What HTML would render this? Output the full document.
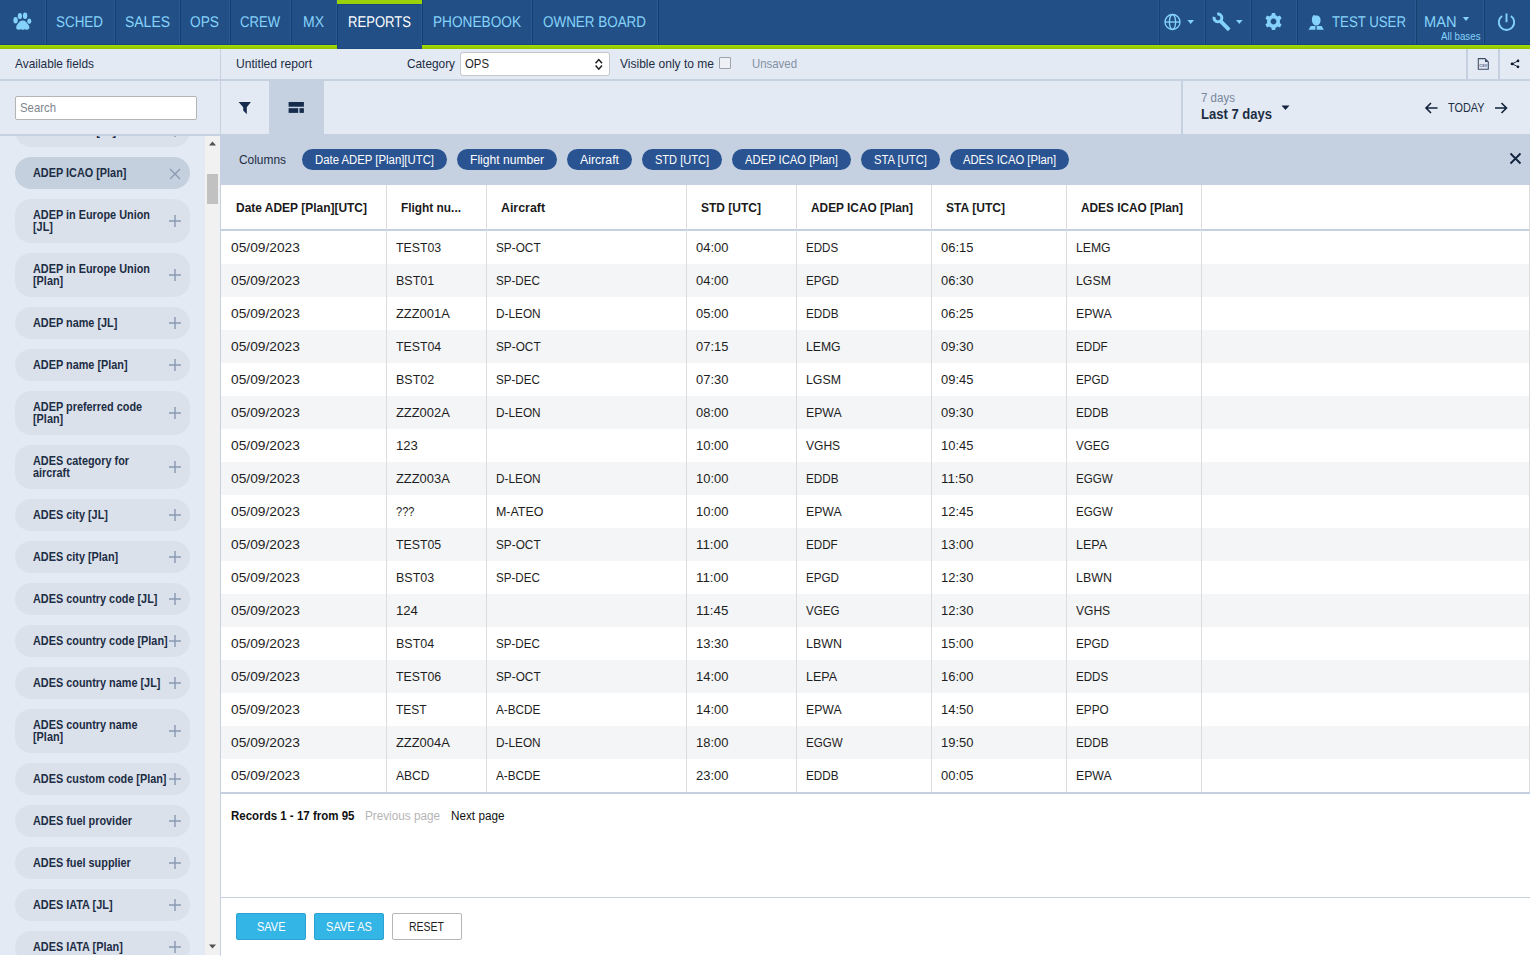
<!DOCTYPE html>
<html><head><meta charset="utf-8">
<style>
*{box-sizing:border-box;margin:0;padding:0}
html,body{width:1530px;height:956px;overflow:hidden;background:#fff;font-family:"Liberation Sans",sans-serif}
.r{position:absolute;display:block}
.t{position:absolute;white-space:nowrap;transform-origin:0 0;font-family:"Liberation Sans",sans-serif}
.gp{text-rendering:geometricPrecision}
</style></head><body>
<div class="r" style="left:0px;top:0px;width:1530px;height:44px;background:#225086;"></div>
<div class="r" style="left:0px;top:44px;width:1530px;height:1px;background:#1b4683;"></div>
<div class="r" style="left:0px;top:45px;width:1530px;height:4px;background:linear-gradient(#a5da05,#8dc701);"></div>
<div class="r" style="left:45px;top:0px;width:1px;height:44px;background:#2a5a93;"></div>
<div class="r" style="left:46px;top:0px;width:1px;height:44px;background:#13406f;"></div>
<div class="r" style="left:114px;top:0px;width:1px;height:44px;background:#2a5a93;"></div>
<div class="r" style="left:115px;top:0px;width:1px;height:44px;background:#13406f;"></div>
<div class="r" style="left:179px;top:0px;width:1px;height:44px;background:#2a5a93;"></div>
<div class="r" style="left:180px;top:0px;width:1px;height:44px;background:#13406f;"></div>
<div class="r" style="left:229px;top:0px;width:1px;height:44px;background:#2a5a93;"></div>
<div class="r" style="left:230px;top:0px;width:1px;height:44px;background:#13406f;"></div>
<div class="r" style="left:290px;top:0px;width:1px;height:44px;background:#2a5a93;"></div>
<div class="r" style="left:291px;top:0px;width:1px;height:44px;background:#13406f;"></div>
<div class="r" style="left:531px;top:0px;width:1px;height:44px;background:#2a5a93;"></div>
<div class="r" style="left:532px;top:0px;width:1px;height:44px;background:#13406f;"></div>
<div class="r" style="left:657px;top:0px;width:1px;height:44px;background:#2a5a93;"></div>
<div class="r" style="left:658px;top:0px;width:1px;height:44px;background:#13406f;"></div>
<div class="r" style="left:1158px;top:0px;width:1px;height:44px;background:#2a5a93;"></div>
<div class="r" style="left:1159px;top:0px;width:1px;height:44px;background:#13406f;"></div>
<div class="r" style="left:1204px;top:0px;width:1px;height:44px;background:#2a5a93;"></div>
<div class="r" style="left:1205px;top:0px;width:1px;height:44px;background:#13406f;"></div>
<div class="r" style="left:1250px;top:0px;width:1px;height:44px;background:#2a5a93;"></div>
<div class="r" style="left:1251px;top:0px;width:1px;height:44px;background:#13406f;"></div>
<div class="r" style="left:1296px;top:0px;width:1px;height:44px;background:#2a5a93;"></div>
<div class="r" style="left:1297px;top:0px;width:1px;height:44px;background:#13406f;"></div>
<div class="r" style="left:1415px;top:0px;width:1px;height:44px;background:#2a5a93;"></div>
<div class="r" style="left:1416px;top:0px;width:1px;height:44px;background:#13406f;"></div>
<div class="r" style="left:1483px;top:0px;width:1px;height:44px;background:#2a5a93;"></div>
<div class="r" style="left:1484px;top:0px;width:1px;height:44px;background:#13406f;"></div>
<div class="r" style="left:337px;top:0px;width:85px;height:49px;background:#225086;"></div>
<div class="r" style="left:337px;top:0px;width:85px;height:4px;background:#9bd10a;"></div>
<div class="r" style="left:337px;top:4px;width:85px;height:1px;background:#1b4683;"></div>
<div class="r" style="left:336px;top:0px;width:1px;height:45px;background:#2a5a93;"></div>
<div class="r" style="left:337px;top:4px;width:1px;height:45px;background:#13406f;"></div>
<div class="r" style="left:421px;top:4px;width:1px;height:41px;background:#2a5a93;"></div>
<div class="r" style="left:422px;top:0px;width:1px;height:45px;background:#13406f;"></div>
<div class="r" style="left:337px;top:48px;width:85px;height:1px;background:#1e4a80;"></div>
<span class="t" style="left:56.00px;top:15.03px;font-size:15.50px;line-height:15.50px;color:#86d3fb;transform:scaleX(0.8662);text-rendering:geometricPrecision;">SCHED</span>
<span class="t" style="left:125.00px;top:15.03px;font-size:15.50px;line-height:15.50px;color:#86d3fb;transform:scaleX(0.9004);text-rendering:geometricPrecision;">SALES</span>
<span class="t" style="left:190.00px;top:15.03px;font-size:15.50px;line-height:15.50px;color:#86d3fb;transform:scaleX(0.8859);text-rendering:geometricPrecision;">OPS</span>
<span class="t" style="left:240.00px;top:15.03px;font-size:15.50px;line-height:15.50px;color:#86d3fb;transform:scaleX(0.8447);text-rendering:geometricPrecision;">CREW</span>
<span class="t" style="left:303.00px;top:15.03px;font-size:15.50px;line-height:15.50px;color:#86d3fb;transform:scaleX(0.9032);text-rendering:geometricPrecision;">MX</span>
<span class="t" style="left:433.00px;top:15.03px;font-size:15.50px;line-height:15.50px;color:#86d3fb;transform:scaleX(0.8808);text-rendering:geometricPrecision;">PHONEBOOK</span>
<span class="t" style="left:543.00px;top:15.03px;font-size:15.50px;line-height:15.50px;color:#86d3fb;transform:scaleX(0.8667);text-rendering:geometricPrecision;">OWNER BOARD</span>
<span class="t" style="left:348.00px;top:15.03px;font-size:15.50px;line-height:15.50px;color:#ffffff;transform:scaleX(0.8439);text-rendering:geometricPrecision;">REPORTS</span>
<span class="t" style="left:1332.00px;top:15.03px;font-size:15.50px;line-height:15.50px;color:#86d3fb;transform:scaleX(0.8534);text-rendering:geometricPrecision;">TEST USER</span>
<span class="t" style="left:1424.00px;top:15.03px;font-size:15.50px;line-height:15.50px;color:#86d3fb;transform:scaleX(0.9436);text-rendering:geometricPrecision;">MAN</span>
<span class="t" style="left:1441.00px;top:31.50px;font-size:10.00px;line-height:10.00px;color:#86d3fb;transform:scaleX(0.9735);">All bases</span>
<div class="r" style="left:0px;top:49px;width:220px;height:906px;background:#e3eaf4;"></div>
<div class="r" style="left:0px;top:79px;width:220px;height:2px;background:#c5d1e1;"></div>
<span class="t" style="left:15.00px;top:56.95px;font-size:13.00px;line-height:13.00px;color:#1d2d44;transform:scaleX(0.9135);">Available fields</span>
<div class="r" style="left:15px;top:96px;width:182px;height:24px;background:#fff;border:1px solid #b4b4b4;border-radius:2px"></div>
<span class="t" style="left:20.00px;top:100.95px;font-size:13.00px;line-height:13.00px;color:#80868e;transform:scaleX(0.8740);">Search</span>
<div class="r" style="left:0px;top:134px;width:220px;height:2px;background:#c5d1e1;"></div>
<div class="r" style="left:205px;top:136px;width:15px;height:819px;background:#f1f1f1;"></div>
<div class="r" style="left:207px;top:174px;width:11px;height:30px;background:#c1c1c1;"></div>
<svg class="r" style="left:209px;top:141px" width="7" height="5"><path d="M0 4.5L3.5 0.5L7 4.5Z" fill="#505050"/></svg>
<svg class="r" style="left:209px;top:944px" width="7" height="5"><path d="M0 0.5L3.5 4.5L7 0.5Z" fill="#505050"/></svg>
<div class="r" style="left:0;top:136px;width:205px;height:819px;overflow:hidden">
<div class="r" style="left:15px;top:-21px;width:175px;height:32px;border-radius:16px;background:#dae1eb"></div>
<span class="t" style="left:33.00px;top:-10.70px;font-size:12.00px;line-height:12.00px;color:#1d2d44;font-weight:bold;transform:scaleX(0.9057);">ADEP ICAO [JL]</span>
<svg class="r" style="left:168px;top:-12.0px" width="14" height="14"><path d="M7 1V13M1 7H13" stroke="#8b9bb1" stroke-width="1.4"/></svg>
<div class="r" style="left:15px;top:21px;width:175px;height:32px;border-radius:16px;background:#c5d0de"></div>
<span class="t" style="left:33.00px;top:31.30px;font-size:12.00px;line-height:12.00px;color:#1d2d44;font-weight:bold;transform:scaleX(0.9057);">ADEP ICAO [Plan]</span>
<svg class="r" style="left:169px;top:31.5px" width="12" height="12"><path d="M1 1L11 11M11 1L1 11" stroke="#8b9bb1" stroke-width="1.4"/></svg>
<div class="r" style="left:15px;top:63px;width:175px;height:44px;border-radius:16px;background:#dae1eb"></div>
<span class="t" style="left:33.00px;top:73.30px;font-size:12.00px;line-height:12.00px;color:#1d2d44;font-weight:bold;transform:scaleX(0.9057);">ADEP in Europe Union</span>
<span class="t" style="left:33.00px;top:85.30px;font-size:12.00px;line-height:12.00px;color:#1d2d44;font-weight:bold;transform:scaleX(0.9057);">[JL]</span>
<svg class="r" style="left:168px;top:78.0px" width="14" height="14"><path d="M7 1V13M1 7H13" stroke="#8b9bb1" stroke-width="1.4"/></svg>
<div class="r" style="left:15px;top:117px;width:175px;height:44px;border-radius:16px;background:#dae1eb"></div>
<span class="t" style="left:33.00px;top:127.30px;font-size:12.00px;line-height:12.00px;color:#1d2d44;font-weight:bold;transform:scaleX(0.9057);">ADEP in Europe Union</span>
<span class="t" style="left:33.00px;top:139.30px;font-size:12.00px;line-height:12.00px;color:#1d2d44;font-weight:bold;transform:scaleX(0.9057);">[Plan]</span>
<svg class="r" style="left:168px;top:132.0px" width="14" height="14"><path d="M7 1V13M1 7H13" stroke="#8b9bb1" stroke-width="1.4"/></svg>
<div class="r" style="left:15px;top:171px;width:175px;height:32px;border-radius:16px;background:#dae1eb"></div>
<span class="t" style="left:33.00px;top:181.30px;font-size:12.00px;line-height:12.00px;color:#1d2d44;font-weight:bold;transform:scaleX(0.9057);">ADEP name [JL]</span>
<svg class="r" style="left:168px;top:180.0px" width="14" height="14"><path d="M7 1V13M1 7H13" stroke="#8b9bb1" stroke-width="1.4"/></svg>
<div class="r" style="left:15px;top:213px;width:175px;height:32px;border-radius:16px;background:#dae1eb"></div>
<span class="t" style="left:33.00px;top:223.30px;font-size:12.00px;line-height:12.00px;color:#1d2d44;font-weight:bold;transform:scaleX(0.9057);">ADEP name [Plan]</span>
<svg class="r" style="left:168px;top:222.0px" width="14" height="14"><path d="M7 1V13M1 7H13" stroke="#8b9bb1" stroke-width="1.4"/></svg>
<div class="r" style="left:15px;top:255px;width:175px;height:44px;border-radius:16px;background:#dae1eb"></div>
<span class="t" style="left:33.00px;top:265.30px;font-size:12.00px;line-height:12.00px;color:#1d2d44;font-weight:bold;transform:scaleX(0.9057);">ADEP preferred code</span>
<span class="t" style="left:33.00px;top:277.30px;font-size:12.00px;line-height:12.00px;color:#1d2d44;font-weight:bold;transform:scaleX(0.9057);">[Plan]</span>
<svg class="r" style="left:168px;top:270.0px" width="14" height="14"><path d="M7 1V13M1 7H13" stroke="#8b9bb1" stroke-width="1.4"/></svg>
<div class="r" style="left:15px;top:309px;width:175px;height:44px;border-radius:16px;background:#dae1eb"></div>
<span class="t" style="left:33.00px;top:319.30px;font-size:12.00px;line-height:12.00px;color:#1d2d44;font-weight:bold;transform:scaleX(0.9057);">ADES category for</span>
<span class="t" style="left:33.00px;top:331.30px;font-size:12.00px;line-height:12.00px;color:#1d2d44;font-weight:bold;transform:scaleX(0.9057);">aircraft</span>
<svg class="r" style="left:168px;top:324.0px" width="14" height="14"><path d="M7 1V13M1 7H13" stroke="#8b9bb1" stroke-width="1.4"/></svg>
<div class="r" style="left:15px;top:363px;width:175px;height:32px;border-radius:16px;background:#dae1eb"></div>
<span class="t" style="left:33.00px;top:373.30px;font-size:12.00px;line-height:12.00px;color:#1d2d44;font-weight:bold;transform:scaleX(0.9057);">ADES city [JL]</span>
<svg class="r" style="left:168px;top:372.0px" width="14" height="14"><path d="M7 1V13M1 7H13" stroke="#8b9bb1" stroke-width="1.4"/></svg>
<div class="r" style="left:15px;top:405px;width:175px;height:32px;border-radius:16px;background:#dae1eb"></div>
<span class="t" style="left:33.00px;top:415.30px;font-size:12.00px;line-height:12.00px;color:#1d2d44;font-weight:bold;transform:scaleX(0.9057);">ADES city [Plan]</span>
<svg class="r" style="left:168px;top:414.0px" width="14" height="14"><path d="M7 1V13M1 7H13" stroke="#8b9bb1" stroke-width="1.4"/></svg>
<div class="r" style="left:15px;top:447px;width:175px;height:32px;border-radius:16px;background:#dae1eb"></div>
<span class="t" style="left:33.00px;top:457.30px;font-size:12.00px;line-height:12.00px;color:#1d2d44;font-weight:bold;transform:scaleX(0.9057);">ADES country code [JL]</span>
<svg class="r" style="left:168px;top:456.0px" width="14" height="14"><path d="M7 1V13M1 7H13" stroke="#8b9bb1" stroke-width="1.4"/></svg>
<div class="r" style="left:15px;top:489px;width:175px;height:32px;border-radius:16px;background:#dae1eb"></div>
<span class="t" style="left:33.00px;top:499.30px;font-size:12.00px;line-height:12.00px;color:#1d2d44;font-weight:bold;transform:scaleX(0.9057);">ADES country code [Plan]</span>
<svg class="r" style="left:168px;top:498.0px" width="14" height="14"><path d="M7 1V13M1 7H13" stroke="#8b9bb1" stroke-width="1.4"/></svg>
<div class="r" style="left:15px;top:531px;width:175px;height:32px;border-radius:16px;background:#dae1eb"></div>
<span class="t" style="left:33.00px;top:541.30px;font-size:12.00px;line-height:12.00px;color:#1d2d44;font-weight:bold;transform:scaleX(0.9057);">ADES country name [JL]</span>
<svg class="r" style="left:168px;top:540.0px" width="14" height="14"><path d="M7 1V13M1 7H13" stroke="#8b9bb1" stroke-width="1.4"/></svg>
<div class="r" style="left:15px;top:573px;width:175px;height:44px;border-radius:16px;background:#dae1eb"></div>
<span class="t" style="left:33.00px;top:583.30px;font-size:12.00px;line-height:12.00px;color:#1d2d44;font-weight:bold;transform:scaleX(0.9057);">ADES country name</span>
<span class="t" style="left:33.00px;top:595.30px;font-size:12.00px;line-height:12.00px;color:#1d2d44;font-weight:bold;transform:scaleX(0.9057);">[Plan]</span>
<svg class="r" style="left:168px;top:588.0px" width="14" height="14"><path d="M7 1V13M1 7H13" stroke="#8b9bb1" stroke-width="1.4"/></svg>
<div class="r" style="left:15px;top:627px;width:175px;height:32px;border-radius:16px;background:#dae1eb"></div>
<span class="t" style="left:33.00px;top:637.30px;font-size:12.00px;line-height:12.00px;color:#1d2d44;font-weight:bold;transform:scaleX(0.9057);">ADES custom code [Plan]</span>
<svg class="r" style="left:168px;top:636.0px" width="14" height="14"><path d="M7 1V13M1 7H13" stroke="#8b9bb1" stroke-width="1.4"/></svg>
<div class="r" style="left:15px;top:669px;width:175px;height:32px;border-radius:16px;background:#dae1eb"></div>
<span class="t" style="left:33.00px;top:679.30px;font-size:12.00px;line-height:12.00px;color:#1d2d44;font-weight:bold;transform:scaleX(0.9057);">ADES fuel provider</span>
<svg class="r" style="left:168px;top:678.0px" width="14" height="14"><path d="M7 1V13M1 7H13" stroke="#8b9bb1" stroke-width="1.4"/></svg>
<div class="r" style="left:15px;top:711px;width:175px;height:32px;border-radius:16px;background:#dae1eb"></div>
<span class="t" style="left:33.00px;top:721.30px;font-size:12.00px;line-height:12.00px;color:#1d2d44;font-weight:bold;transform:scaleX(0.9057);">ADES fuel supplier</span>
<svg class="r" style="left:168px;top:720.0px" width="14" height="14"><path d="M7 1V13M1 7H13" stroke="#8b9bb1" stroke-width="1.4"/></svg>
<div class="r" style="left:15px;top:753px;width:175px;height:32px;border-radius:16px;background:#dae1eb"></div>
<span class="t" style="left:33.00px;top:763.30px;font-size:12.00px;line-height:12.00px;color:#1d2d44;font-weight:bold;transform:scaleX(0.9057);">ADES IATA [JL]</span>
<svg class="r" style="left:168px;top:762.0px" width="14" height="14"><path d="M7 1V13M1 7H13" stroke="#8b9bb1" stroke-width="1.4"/></svg>
<div class="r" style="left:15px;top:795px;width:175px;height:32px;border-radius:16px;background:#dae1eb"></div>
<span class="t" style="left:33.00px;top:805.30px;font-size:12.00px;line-height:12.00px;color:#1d2d44;font-weight:bold;transform:scaleX(0.9057);">ADES IATA [Plan]</span>
<svg class="r" style="left:168px;top:804.0px" width="14" height="14"><path d="M7 1V13M1 7H13" stroke="#8b9bb1" stroke-width="1.4"/></svg>
</div>
<div class="r" style="left:220px;top:49px;width:1310px;height:907px;background:#fff;"></div>
<div class="r" style="left:220px;top:49px;width:1px;height:907px;background:#c5d1e1;"></div>
<div class="r" style="left:221px;top:49px;width:1309px;height:30px;background:#e3eaf4;"></div>
<div class="r" style="left:221px;top:79px;width:1309px;height:2px;background:#c5d1e1;"></div>
<span class="t" style="left:236.00px;top:56.95px;font-size:13.00px;line-height:13.00px;color:#1d2d44;transform:scaleX(0.9308);">Untitled report</span>
<span class="t" style="left:407.00px;top:56.95px;font-size:13.00px;line-height:13.00px;color:#1d2d44;transform:scaleX(0.9100);">Category</span>
<div class="r" style="left:460px;top:52px;width:150px;height:24px;background:#fff;border:1px solid #c4c8cc;border-radius:3px"></div>
<span class="t" style="left:465.00px;top:57.45px;font-size:13.00px;line-height:13.00px;color:#1e1e1e;transform:scaleX(0.8742);">OPS</span>
<svg class="r" style="left:590px;top:55px" width="16" height="18" viewBox="590 55 16 18"><path d="M595.6 63.2L598.8 59.6L602 63.2M595.6 65.6L598.8 69.2L602 65.6" stroke="#1e1e1e" stroke-width="1.5" fill="none"/></svg>
<span class="t" style="left:620.00px;top:56.95px;font-size:13.00px;line-height:13.00px;color:#1d2d44;transform:scaleX(0.9248);">Visible only to me</span>
<div class="r" style="left:719px;top:57px;width:12px;height:12px;background:#edf0f4;border:1px solid #9ea3aa;border-radius:1px"></div>
<span class="t" style="left:752.00px;top:57.45px;font-size:13.00px;line-height:13.00px;color:#8391a5;transform:scaleX(0.8771);">Unsaved</span>
<div class="r" style="left:1466px;top:49px;width:2px;height:30px;background:#c5d1e1;"></div>
<div class="r" style="left:1498px;top:49px;width:2px;height:30px;background:#c5d1e1;"></div>
<svg class="r" style="left:1474px;top:55px" width="18" height="18" viewBox="1474 55 18 18"><path d="M1478.3 58.6H1485L1488.3 61.9V69.3H1478.3Z" fill="none" stroke="#3b4b66" stroke-width="1.05" stroke-linejoin="round"/><path d="M1485 58.6V61.9H1488.3Z" fill="#3b4b66"/><text x="1483.3" y="67.3" font-size="4.2" font-weight="bold" text-anchor="middle" fill="#4a5a80" font-family="Liberation Sans" textLength="8" lengthAdjust="spacingAndGlyphs">CSV</text></svg>
<svg class="r" style="left:1506px;top:56px" width="16" height="14" viewBox="1506 56 16 14"><path d="M1518 60.9L1512.2 63.9L1518 66.8" fill="none" stroke="#111d33" stroke-width="0.9"/><circle cx="1518" cy="60.9" r="1.35" fill="#0e1a30"/><ellipse cx="1512.2" cy="63.9" rx="1.55" ry="1.3" fill="#0e1a30"/><circle cx="1518" cy="66.8" r="1.35" fill="#0e1a30"/></svg>
<div class="r" style="left:221px;top:81px;width:1309px;height:53px;background:#e3eaf4;"></div>
<div class="r" style="left:269px;top:81px;width:55px;height:53px;background:#c5d1e1;"></div>
<svg class="r" style="left:230px;top:95px" width="30" height="25" viewBox="230 95 30 25"><path d="M238.6 102H250.9L246.8 107.2V114.2L243.2 110.6V107.2Z" fill="#162c4c"/></svg>
<svg class="r" style="left:280px;top:95px" width="30" height="25" viewBox="280 95 30 25"><g fill="#162c4c"><rect x="288.6" y="102" width="15.3" height="4.7"/><rect x="288.6" y="108.2" width="9.6" height="4.7"/><rect x="299.5" y="108.2" width="4.4" height="4.7"/></g></svg>
<div class="r" style="left:1181px;top:81px;width:2px;height:53px;background:#c5d1e1;"></div>
<span class="t" style="left:1201.00px;top:91.80px;font-size:12.00px;line-height:12.00px;color:#78879b;transform:scaleX(0.9617);">7 days</span>
<span class="t" style="left:1201.00px;top:107.10px;font-size:14.00px;line-height:14.00px;color:#1d2d44;font-weight:bold;transform:scaleX(0.9310);">Last 7 days</span>
<svg class="r" style="left:1281px;top:105px" width="10" height="6"><path d="M0.5 0.5H8.5L4.5 5Z" fill="#13233d"/></svg>
<svg class="r" style="left:1424px;top:101px" width="15" height="14"><path d="M13.5 7H2M7 2L2 7L7 12" fill="none" stroke="#13233d" stroke-width="1.6"/></svg>
<span class="t" style="left:1448.00px;top:102.38px;font-size:12.50px;line-height:12.50px;color:#1d2d44;transform:scaleX(0.8710);">TODAY</span>
<svg class="r" style="left:1494px;top:101px" width="15" height="14"><path d="M1 7H12.5M7.5 2L12.5 7L7.5 12" fill="none" stroke="#13233d" stroke-width="1.6"/></svg>
<div class="r" style="left:221px;top:134px;width:1309px;height:51px;background:#c5d1e1;"></div>
<span class="t" style="left:239.00px;top:153.88px;font-size:12.50px;line-height:12.50px;color:#1d2d44;transform:scaleX(0.9530);">Columns</span>
<div class="r" style="left:302px;top:149px;width:145px;height:21px;border-radius:11px;background:#2a5391"></div>
<span class="t" style="left:315.00px;top:153.88px;font-size:12.50px;line-height:12.50px;color:#ffffff;transform:scaleX(0.9079);">Date ADEP [Plan][UTC]</span>
<div class="r" style="left:457px;top:149px;width:100px;height:21px;border-radius:11px;background:#2a5391"></div>
<span class="t" style="left:470.00px;top:153.88px;font-size:12.50px;line-height:12.50px;color:#ffffff;transform:scaleX(0.9683);">Flight number</span>
<div class="r" style="left:567px;top:149px;width:65px;height:21px;border-radius:11px;background:#2a5391"></div>
<span class="t" style="left:580.00px;top:153.88px;font-size:12.50px;line-height:12.50px;color:#ffffff;transform:scaleX(0.9852);">Aircraft</span>
<div class="r" style="left:642px;top:149px;width:80px;height:21px;border-radius:11px;background:#2a5391"></div>
<span class="t" style="left:655.00px;top:153.88px;font-size:12.50px;line-height:12.50px;color:#ffffff;transform:scaleX(0.8837);">STD [UTC]</span>
<div class="r" style="left:732px;top:149px;width:119px;height:21px;border-radius:11px;background:#2a5391"></div>
<span class="t" style="left:745.00px;top:153.88px;font-size:12.50px;line-height:12.50px;color:#ffffff;transform:scaleX(0.9004);">ADEP ICAO [Plan]</span>
<div class="r" style="left:861px;top:149px;width:79px;height:21px;border-radius:11px;background:#2a5391"></div>
<span class="t" style="left:874.00px;top:153.88px;font-size:12.50px;line-height:12.50px;color:#ffffff;transform:scaleX(0.9013);">STA [UTC]</span>
<div class="r" style="left:950px;top:149px;width:119px;height:21px;border-radius:11px;background:#2a5391"></div>
<span class="t" style="left:963.00px;top:153.88px;font-size:12.50px;line-height:12.50px;color:#ffffff;transform:scaleX(0.8985);">ADES ICAO [Plan]</span>
<svg class="r" style="left:1509px;top:152px" width="13" height="13"><path d="M1.5 1.5L11.5 11.5M11.5 1.5L1.5 11.5" stroke="#13233d" stroke-width="1.8"/></svg>
<div class="r" style="left:221px;top:185px;width:1309px;height:45px;background:#fff;"></div>
<div class="r" style="left:221px;top:229px;width:1309px;height:2px;background:#c5d1e1;"></div>
<span class="t" style="left:236.00px;top:201.80px;font-size:12.00px;line-height:12.00px;color:#1a1a1a;font-weight:bold;transform:scaleX(0.9974);">Date ADEP [Plan][UTC]</span>
<span class="t" style="left:401.00px;top:201.80px;font-size:12.00px;line-height:12.00px;color:#1a1a1a;font-weight:bold;transform:scaleX(0.9893);">Flight nu...</span>
<span class="t" style="left:501.00px;top:201.80px;font-size:12.00px;line-height:12.00px;color:#1a1a1a;font-weight:bold;transform:scaleX(1.0309);">Aircraft</span>
<span class="t" style="left:701.00px;top:201.80px;font-size:12.00px;line-height:12.00px;color:#1a1a1a;font-weight:bold;transform:scaleX(1.0002);">STD [UTC]</span>
<span class="t" style="left:811.00px;top:201.80px;font-size:12.00px;line-height:12.00px;color:#1a1a1a;font-weight:bold;transform:scaleX(0.9891);">ADEP ICAO [Plan]</span>
<span class="t" style="left:946.00px;top:201.80px;font-size:12.00px;line-height:12.00px;color:#1a1a1a;font-weight:bold;transform:scaleX(1.0059);">STA [UTC]</span>
<span class="t" style="left:1081.00px;top:201.80px;font-size:12.00px;line-height:12.00px;color:#1a1a1a;font-weight:bold;transform:scaleX(0.9870);">ADES ICAO [Plan]</span>
<span class="t" style="left:231.00px;top:240.53px;font-size:13.50px;line-height:13.50px;color:#1e1e1e;transform:scaleX(1.0192);">05/09/2023</span>
<span class="t" style="left:396.00px;top:240.53px;font-size:13.50px;line-height:13.50px;color:#1e1e1e;transform:scaleX(0.9133);">TEST03</span>
<span class="t" style="left:496.00px;top:240.53px;font-size:13.50px;line-height:13.50px;color:#1e1e1e;transform:scaleX(0.8743);">SP-OCT</span>
<span class="t" style="left:696.00px;top:240.53px;font-size:13.50px;line-height:13.50px;color:#1e1e1e;transform:scaleX(0.9576);">04:00</span>
<span class="t" style="left:806.00px;top:240.53px;font-size:13.50px;line-height:13.50px;color:#1e1e1e;transform:scaleX(0.8578);">EDDS</span>
<span class="t" style="left:941.00px;top:240.53px;font-size:13.50px;line-height:13.50px;color:#1e1e1e;transform:scaleX(0.9576);">06:15</span>
<span class="t" style="left:1076.00px;top:240.53px;font-size:13.50px;line-height:13.50px;color:#1e1e1e;transform:scaleX(0.9041);">LEMG</span>
<div class="r" style="left:221px;top:264px;width:1309px;height:33px;background:#f4f5f7;"></div>
<span class="t" style="left:231.00px;top:273.52px;font-size:13.50px;line-height:13.50px;color:#1e1e1e;transform:scaleX(1.0192);">05/09/2023</span>
<span class="t" style="left:396.00px;top:273.52px;font-size:13.50px;line-height:13.50px;color:#1e1e1e;transform:scaleX(0.9250);">BST01</span>
<span class="t" style="left:496.00px;top:273.52px;font-size:13.50px;line-height:13.50px;color:#1e1e1e;transform:scaleX(0.8590);">SP-DEC</span>
<span class="t" style="left:696.00px;top:273.52px;font-size:13.50px;line-height:13.50px;color:#1e1e1e;transform:scaleX(0.9576);">04:00</span>
<span class="t" style="left:806.00px;top:273.52px;font-size:13.50px;line-height:13.50px;color:#1e1e1e;transform:scaleX(0.8619);">EPGD</span>
<span class="t" style="left:941.00px;top:273.52px;font-size:13.50px;line-height:13.50px;color:#1e1e1e;transform:scaleX(0.9576);">06:30</span>
<span class="t" style="left:1076.00px;top:273.52px;font-size:13.50px;line-height:13.50px;color:#1e1e1e;transform:scaleX(0.9129);">LGSM</span>
<span class="t" style="left:231.00px;top:306.52px;font-size:13.50px;line-height:13.50px;color:#1e1e1e;transform:scaleX(1.0192);">05/09/2023</span>
<span class="t" style="left:396.00px;top:306.52px;font-size:13.50px;line-height:13.50px;color:#1e1e1e;transform:scaleX(0.9548);">ZZZ001A</span>
<span class="t" style="left:496.00px;top:306.52px;font-size:13.50px;line-height:13.50px;color:#1e1e1e;transform:scaleX(0.8750);">D-LEON</span>
<span class="t" style="left:696.00px;top:306.52px;font-size:13.50px;line-height:13.50px;color:#1e1e1e;transform:scaleX(0.9576);">05:00</span>
<span class="t" style="left:806.00px;top:306.52px;font-size:13.50px;line-height:13.50px;color:#1e1e1e;transform:scaleX(0.8676);">EDDB</span>
<span class="t" style="left:941.00px;top:306.52px;font-size:13.50px;line-height:13.50px;color:#1e1e1e;transform:scaleX(0.9576);">06:25</span>
<span class="t" style="left:1076.00px;top:306.52px;font-size:13.50px;line-height:13.50px;color:#1e1e1e;transform:scaleX(0.9070);">EPWA</span>
<div class="r" style="left:221px;top:330px;width:1309px;height:33px;background:#f4f5f7;"></div>
<span class="t" style="left:231.00px;top:339.52px;font-size:13.50px;line-height:13.50px;color:#1e1e1e;transform:scaleX(1.0192);">05/09/2023</span>
<span class="t" style="left:396.00px;top:339.52px;font-size:13.50px;line-height:13.50px;color:#1e1e1e;transform:scaleX(0.9133);">TEST04</span>
<span class="t" style="left:496.00px;top:339.52px;font-size:13.50px;line-height:13.50px;color:#1e1e1e;transform:scaleX(0.8743);">SP-OCT</span>
<span class="t" style="left:696.00px;top:339.52px;font-size:13.50px;line-height:13.50px;color:#1e1e1e;transform:scaleX(0.9576);">07:15</span>
<span class="t" style="left:806.00px;top:339.52px;font-size:13.50px;line-height:13.50px;color:#1e1e1e;transform:scaleX(0.9041);">LEMG</span>
<span class="t" style="left:941.00px;top:339.52px;font-size:13.50px;line-height:13.50px;color:#1e1e1e;transform:scaleX(0.9576);">09:30</span>
<span class="t" style="left:1076.00px;top:339.52px;font-size:13.50px;line-height:13.50px;color:#1e1e1e;transform:scaleX(0.8608);">EDDF</span>
<span class="t" style="left:231.00px;top:372.52px;font-size:13.50px;line-height:13.50px;color:#1e1e1e;transform:scaleX(1.0192);">05/09/2023</span>
<span class="t" style="left:396.00px;top:372.52px;font-size:13.50px;line-height:13.50px;color:#1e1e1e;transform:scaleX(0.9250);">BST02</span>
<span class="t" style="left:496.00px;top:372.52px;font-size:13.50px;line-height:13.50px;color:#1e1e1e;transform:scaleX(0.8590);">SP-DEC</span>
<span class="t" style="left:696.00px;top:372.52px;font-size:13.50px;line-height:13.50px;color:#1e1e1e;transform:scaleX(0.9576);">07:30</span>
<span class="t" style="left:806.00px;top:372.52px;font-size:13.50px;line-height:13.50px;color:#1e1e1e;transform:scaleX(0.9129);">LGSM</span>
<span class="t" style="left:941.00px;top:372.52px;font-size:13.50px;line-height:13.50px;color:#1e1e1e;transform:scaleX(0.9576);">09:45</span>
<span class="t" style="left:1076.00px;top:372.52px;font-size:13.50px;line-height:13.50px;color:#1e1e1e;transform:scaleX(0.8619);">EPGD</span>
<div class="r" style="left:221px;top:396px;width:1309px;height:33px;background:#f4f5f7;"></div>
<span class="t" style="left:231.00px;top:405.52px;font-size:13.50px;line-height:13.50px;color:#1e1e1e;transform:scaleX(1.0192);">05/09/2023</span>
<span class="t" style="left:396.00px;top:405.52px;font-size:13.50px;line-height:13.50px;color:#1e1e1e;transform:scaleX(0.9548);">ZZZ002A</span>
<span class="t" style="left:496.00px;top:405.52px;font-size:13.50px;line-height:13.50px;color:#1e1e1e;transform:scaleX(0.8750);">D-LEON</span>
<span class="t" style="left:696.00px;top:405.52px;font-size:13.50px;line-height:13.50px;color:#1e1e1e;transform:scaleX(0.9576);">08:00</span>
<span class="t" style="left:806.00px;top:405.52px;font-size:13.50px;line-height:13.50px;color:#1e1e1e;transform:scaleX(0.9070);">EPWA</span>
<span class="t" style="left:941.00px;top:405.52px;font-size:13.50px;line-height:13.50px;color:#1e1e1e;transform:scaleX(0.9576);">09:30</span>
<span class="t" style="left:1076.00px;top:405.52px;font-size:13.50px;line-height:13.50px;color:#1e1e1e;transform:scaleX(0.8676);">EDDB</span>
<span class="t" style="left:231.00px;top:438.52px;font-size:13.50px;line-height:13.50px;color:#1e1e1e;transform:scaleX(1.0192);">05/09/2023</span>
<span class="t" style="left:396.00px;top:438.52px;font-size:13.50px;line-height:13.50px;color:#1e1e1e;transform:scaleX(0.9723);">123</span>
<span class="t" style="left:696.00px;top:438.52px;font-size:13.50px;line-height:13.50px;color:#1e1e1e;transform:scaleX(0.9576);">10:00</span>
<span class="t" style="left:806.00px;top:438.52px;font-size:13.50px;line-height:13.50px;color:#1e1e1e;transform:scaleX(0.8918);">VGHS</span>
<span class="t" style="left:941.00px;top:438.52px;font-size:13.50px;line-height:13.50px;color:#1e1e1e;transform:scaleX(0.9576);">10:45</span>
<span class="t" style="left:1076.00px;top:438.52px;font-size:13.50px;line-height:13.50px;color:#1e1e1e;transform:scaleX(0.8554);">VGEG</span>
<div class="r" style="left:221px;top:462px;width:1309px;height:33px;background:#f4f5f7;"></div>
<span class="t" style="left:231.00px;top:471.52px;font-size:13.50px;line-height:13.50px;color:#1e1e1e;transform:scaleX(1.0192);">05/09/2023</span>
<span class="t" style="left:396.00px;top:471.52px;font-size:13.50px;line-height:13.50px;color:#1e1e1e;transform:scaleX(0.9548);">ZZZ003A</span>
<span class="t" style="left:496.00px;top:471.52px;font-size:13.50px;line-height:13.50px;color:#1e1e1e;transform:scaleX(0.8750);">D-LEON</span>
<span class="t" style="left:696.00px;top:471.52px;font-size:13.50px;line-height:13.50px;color:#1e1e1e;transform:scaleX(0.9576);">10:00</span>
<span class="t" style="left:806.00px;top:471.52px;font-size:13.50px;line-height:13.50px;color:#1e1e1e;transform:scaleX(0.8676);">EDDB</span>
<span class="t" style="left:941.00px;top:471.52px;font-size:13.50px;line-height:13.50px;color:#1e1e1e;transform:scaleX(0.9868);">11:50</span>
<span class="t" style="left:1076.00px;top:471.52px;font-size:13.50px;line-height:13.50px;color:#1e1e1e;transform:scaleX(0.8570);">EGGW</span>
<span class="t" style="left:231.00px;top:504.52px;font-size:13.50px;line-height:13.50px;color:#1e1e1e;transform:scaleX(1.0192);">05/09/2023</span>
<span class="t" style="left:396.00px;top:504.52px;font-size:13.50px;line-height:13.50px;color:#1e1e1e;transform:scaleX(0.8176);">???</span>
<span class="t" style="left:496.00px;top:504.52px;font-size:13.50px;line-height:13.50px;color:#1e1e1e;transform:scaleX(0.9209);">M-ATEO</span>
<span class="t" style="left:696.00px;top:504.52px;font-size:13.50px;line-height:13.50px;color:#1e1e1e;transform:scaleX(0.9576);">10:00</span>
<span class="t" style="left:806.00px;top:504.52px;font-size:13.50px;line-height:13.50px;color:#1e1e1e;transform:scaleX(0.9070);">EPWA</span>
<span class="t" style="left:941.00px;top:504.52px;font-size:13.50px;line-height:13.50px;color:#1e1e1e;transform:scaleX(0.9576);">12:45</span>
<span class="t" style="left:1076.00px;top:504.52px;font-size:13.50px;line-height:13.50px;color:#1e1e1e;transform:scaleX(0.8570);">EGGW</span>
<div class="r" style="left:221px;top:528px;width:1309px;height:33px;background:#f4f5f7;"></div>
<span class="t" style="left:231.00px;top:537.52px;font-size:13.50px;line-height:13.50px;color:#1e1e1e;transform:scaleX(1.0192);">05/09/2023</span>
<span class="t" style="left:396.00px;top:537.52px;font-size:13.50px;line-height:13.50px;color:#1e1e1e;transform:scaleX(0.9133);">TEST05</span>
<span class="t" style="left:496.00px;top:537.52px;font-size:13.50px;line-height:13.50px;color:#1e1e1e;transform:scaleX(0.8743);">SP-OCT</span>
<span class="t" style="left:696.00px;top:537.52px;font-size:13.50px;line-height:13.50px;color:#1e1e1e;transform:scaleX(0.9868);">11:00</span>
<span class="t" style="left:806.00px;top:537.52px;font-size:13.50px;line-height:13.50px;color:#1e1e1e;transform:scaleX(0.8608);">EDDF</span>
<span class="t" style="left:941.00px;top:537.52px;font-size:13.50px;line-height:13.50px;color:#1e1e1e;transform:scaleX(0.9576);">13:00</span>
<span class="t" style="left:1076.00px;top:537.52px;font-size:13.50px;line-height:13.50px;color:#1e1e1e;transform:scaleX(0.9268);">LEPA</span>
<span class="t" style="left:231.00px;top:570.52px;font-size:13.50px;line-height:13.50px;color:#1e1e1e;transform:scaleX(1.0192);">05/09/2023</span>
<span class="t" style="left:396.00px;top:570.52px;font-size:13.50px;line-height:13.50px;color:#1e1e1e;transform:scaleX(0.9250);">BST03</span>
<span class="t" style="left:496.00px;top:570.52px;font-size:13.50px;line-height:13.50px;color:#1e1e1e;transform:scaleX(0.8590);">SP-DEC</span>
<span class="t" style="left:696.00px;top:570.52px;font-size:13.50px;line-height:13.50px;color:#1e1e1e;transform:scaleX(0.9868);">11:00</span>
<span class="t" style="left:806.00px;top:570.52px;font-size:13.50px;line-height:13.50px;color:#1e1e1e;transform:scaleX(0.8619);">EPGD</span>
<span class="t" style="left:941.00px;top:570.52px;font-size:13.50px;line-height:13.50px;color:#1e1e1e;transform:scaleX(0.9576);">12:30</span>
<span class="t" style="left:1076.00px;top:570.52px;font-size:13.50px;line-height:13.50px;color:#1e1e1e;transform:scaleX(0.9201);">LBWN</span>
<div class="r" style="left:221px;top:594px;width:1309px;height:33px;background:#f4f5f7;"></div>
<span class="t" style="left:231.00px;top:603.52px;font-size:13.50px;line-height:13.50px;color:#1e1e1e;transform:scaleX(1.0192);">05/09/2023</span>
<span class="t" style="left:396.00px;top:603.52px;font-size:13.50px;line-height:13.50px;color:#1e1e1e;transform:scaleX(0.9723);">124</span>
<span class="t" style="left:696.00px;top:603.52px;font-size:13.50px;line-height:13.50px;color:#1e1e1e;transform:scaleX(0.9868);">11:45</span>
<span class="t" style="left:806.00px;top:603.52px;font-size:13.50px;line-height:13.50px;color:#1e1e1e;transform:scaleX(0.8554);">VGEG</span>
<span class="t" style="left:941.00px;top:603.52px;font-size:13.50px;line-height:13.50px;color:#1e1e1e;transform:scaleX(0.9576);">12:30</span>
<span class="t" style="left:1076.00px;top:603.52px;font-size:13.50px;line-height:13.50px;color:#1e1e1e;transform:scaleX(0.8918);">VGHS</span>
<span class="t" style="left:231.00px;top:636.52px;font-size:13.50px;line-height:13.50px;color:#1e1e1e;transform:scaleX(1.0192);">05/09/2023</span>
<span class="t" style="left:396.00px;top:636.52px;font-size:13.50px;line-height:13.50px;color:#1e1e1e;transform:scaleX(0.9250);">BST04</span>
<span class="t" style="left:496.00px;top:636.52px;font-size:13.50px;line-height:13.50px;color:#1e1e1e;transform:scaleX(0.8590);">SP-DEC</span>
<span class="t" style="left:696.00px;top:636.52px;font-size:13.50px;line-height:13.50px;color:#1e1e1e;transform:scaleX(0.9576);">13:30</span>
<span class="t" style="left:806.00px;top:636.52px;font-size:13.50px;line-height:13.50px;color:#1e1e1e;transform:scaleX(0.9201);">LBWN</span>
<span class="t" style="left:941.00px;top:636.52px;font-size:13.50px;line-height:13.50px;color:#1e1e1e;transform:scaleX(0.9576);">15:00</span>
<span class="t" style="left:1076.00px;top:636.52px;font-size:13.50px;line-height:13.50px;color:#1e1e1e;transform:scaleX(0.8619);">EPGD</span>
<div class="r" style="left:221px;top:660px;width:1309px;height:33px;background:#f4f5f7;"></div>
<span class="t" style="left:231.00px;top:669.52px;font-size:13.50px;line-height:13.50px;color:#1e1e1e;transform:scaleX(1.0192);">05/09/2023</span>
<span class="t" style="left:396.00px;top:669.52px;font-size:13.50px;line-height:13.50px;color:#1e1e1e;transform:scaleX(0.9133);">TEST06</span>
<span class="t" style="left:496.00px;top:669.52px;font-size:13.50px;line-height:13.50px;color:#1e1e1e;transform:scaleX(0.8743);">SP-OCT</span>
<span class="t" style="left:696.00px;top:669.52px;font-size:13.50px;line-height:13.50px;color:#1e1e1e;transform:scaleX(0.9576);">14:00</span>
<span class="t" style="left:806.00px;top:669.52px;font-size:13.50px;line-height:13.50px;color:#1e1e1e;transform:scaleX(0.9268);">LEPA</span>
<span class="t" style="left:941.00px;top:669.52px;font-size:13.50px;line-height:13.50px;color:#1e1e1e;transform:scaleX(0.9576);">16:00</span>
<span class="t" style="left:1076.00px;top:669.52px;font-size:13.50px;line-height:13.50px;color:#1e1e1e;transform:scaleX(0.8578);">EDDS</span>
<span class="t" style="left:231.00px;top:702.52px;font-size:13.50px;line-height:13.50px;color:#1e1e1e;transform:scaleX(1.0192);">05/09/2023</span>
<span class="t" style="left:396.00px;top:702.52px;font-size:13.50px;line-height:13.50px;color:#1e1e1e;transform:scaleX(0.8877);">TEST</span>
<span class="t" style="left:496.00px;top:702.52px;font-size:13.50px;line-height:13.50px;color:#1e1e1e;transform:scaleX(0.8717);">A-BCDE</span>
<span class="t" style="left:696.00px;top:702.52px;font-size:13.50px;line-height:13.50px;color:#1e1e1e;transform:scaleX(0.9576);">14:00</span>
<span class="t" style="left:806.00px;top:702.52px;font-size:13.50px;line-height:13.50px;color:#1e1e1e;transform:scaleX(0.9070);">EPWA</span>
<span class="t" style="left:941.00px;top:702.52px;font-size:13.50px;line-height:13.50px;color:#1e1e1e;transform:scaleX(0.9576);">14:50</span>
<span class="t" style="left:1076.00px;top:702.52px;font-size:13.50px;line-height:13.50px;color:#1e1e1e;transform:scaleX(0.8724);">EPPO</span>
<div class="r" style="left:221px;top:726px;width:1309px;height:33px;background:#f4f5f7;"></div>
<span class="t" style="left:231.00px;top:735.52px;font-size:13.50px;line-height:13.50px;color:#1e1e1e;transform:scaleX(1.0192);">05/09/2023</span>
<span class="t" style="left:396.00px;top:735.52px;font-size:13.50px;line-height:13.50px;color:#1e1e1e;transform:scaleX(0.9548);">ZZZ004A</span>
<span class="t" style="left:496.00px;top:735.52px;font-size:13.50px;line-height:13.50px;color:#1e1e1e;transform:scaleX(0.8750);">D-LEON</span>
<span class="t" style="left:696.00px;top:735.52px;font-size:13.50px;line-height:13.50px;color:#1e1e1e;transform:scaleX(0.9576);">18:00</span>
<span class="t" style="left:806.00px;top:735.52px;font-size:13.50px;line-height:13.50px;color:#1e1e1e;transform:scaleX(0.8570);">EGGW</span>
<span class="t" style="left:941.00px;top:735.52px;font-size:13.50px;line-height:13.50px;color:#1e1e1e;transform:scaleX(0.9576);">19:50</span>
<span class="t" style="left:1076.00px;top:735.52px;font-size:13.50px;line-height:13.50px;color:#1e1e1e;transform:scaleX(0.8676);">EDDB</span>
<span class="t" style="left:231.00px;top:768.52px;font-size:13.50px;line-height:13.50px;color:#1e1e1e;transform:scaleX(1.0192);">05/09/2023</span>
<span class="t" style="left:396.00px;top:768.52px;font-size:13.50px;line-height:13.50px;color:#1e1e1e;transform:scaleX(0.8949);">ABCD</span>
<span class="t" style="left:496.00px;top:768.52px;font-size:13.50px;line-height:13.50px;color:#1e1e1e;transform:scaleX(0.8717);">A-BCDE</span>
<span class="t" style="left:696.00px;top:768.52px;font-size:13.50px;line-height:13.50px;color:#1e1e1e;transform:scaleX(0.9576);">23:00</span>
<span class="t" style="left:806.00px;top:768.52px;font-size:13.50px;line-height:13.50px;color:#1e1e1e;transform:scaleX(0.8676);">EDDB</span>
<span class="t" style="left:941.00px;top:768.52px;font-size:13.50px;line-height:13.50px;color:#1e1e1e;transform:scaleX(0.9576);">00:05</span>
<span class="t" style="left:1076.00px;top:768.52px;font-size:13.50px;line-height:13.50px;color:#1e1e1e;transform:scaleX(0.9070);">EPWA</span>
<div class="r" style="left:386px;top:185px;width:1px;height:607px;background:#dcdcdc;"></div>
<div class="r" style="left:486px;top:185px;width:1px;height:607px;background:#dcdcdc;"></div>
<div class="r" style="left:686px;top:185px;width:1px;height:607px;background:#dcdcdc;"></div>
<div class="r" style="left:796px;top:185px;width:1px;height:607px;background:#dcdcdc;"></div>
<div class="r" style="left:931px;top:185px;width:1px;height:607px;background:#dcdcdc;"></div>
<div class="r" style="left:1066px;top:185px;width:1px;height:607px;background:#dcdcdc;"></div>
<div class="r" style="left:1201px;top:185px;width:1px;height:607px;background:#dcdcdc;"></div>
<div class="r" style="left:1529px;top:185px;width:1px;height:607px;background:#dcdcdc;"></div>
<div class="r" style="left:221px;top:792px;width:1309px;height:2px;background:#c5d1e1;"></div>
<span class="t" style="left:231.00px;top:810.38px;font-size:12.50px;line-height:12.50px;color:#111;font-weight:bold;transform:scaleX(0.9211);">Records 1 - 17 from 95</span>
<span class="t" style="left:365.00px;top:810.38px;font-size:12.50px;line-height:12.50px;color:#b5b5b5;transform:scaleX(0.9385);">Previous page</span>
<span class="t" style="left:451.00px;top:810.38px;font-size:12.50px;line-height:12.50px;color:#111;transform:scaleX(0.9389);">Next page</span>
<div class="r" style="left:221px;top:897px;width:1309px;height:1px;background:#c5d1e1;"></div>
<div class="r" style="left:236px;top:913px;width:70px;height:27px;background:#33b5e5;border:1px solid #2aa3d2;border-radius:2px"></div>
<div class="r" style="left:314px;top:913px;width:70px;height:27px;background:#33b5e5;border:1px solid #2aa3d2;border-radius:2px"></div>
<div class="r" style="left:392px;top:913px;width:70px;height:27px;background:#fff;border:1px solid #b5b5b5;border-radius:2px"></div>
<span class="t" style="left:257.00px;top:921.38px;font-size:12.50px;line-height:12.50px;color:#fff;transform:scaleX(0.8790);">SAVE</span>
<span class="t" style="left:326.00px;top:921.38px;font-size:12.50px;line-height:12.50px;color:#fff;transform:scaleX(0.8866);">SAVE AS</span>
<span class="t" style="left:409.00px;top:921.38px;font-size:12.50px;line-height:12.50px;color:#1e1e1e;transform:scaleX(0.8398);">RESET</span>
<svg class="r" style="left:10px;top:10px" width="25" height="25" viewBox="10 10 25 25"><g fill="#84d2fb"><ellipse cx="15.6" cy="20.3" rx="2.2" ry="3.2"/><ellipse cx="19.9" cy="16" rx="2.1" ry="3.1"/><ellipse cx="25.1" cy="15.8" rx="2.2" ry="3.3"/><ellipse cx="29.3" cy="21.3" rx="2.05" ry="2.7"/><path d="M22.7 20.4C20 20.4 18.6 22.6 17.3 24.6C16.3 26 16 27.3 16.3 28.3C16.7 29.5 17.8 29.9 18.8 29.7C19.6 29.6 20 29.2 20.6 29.2C21.2 29.2 21.7 29.9 22.7 29.9C23.7 29.9 24.2 29.2 24.8 29.2C25.4 29.2 25.8 29.6 26.6 29.7C27.6 29.9 28.9 29.4 29.3 28.3C29.6 27.3 29.2 26 28.2 24.6C26.9 22.6 25.4 20.4 22.7 20.4Z"/></g></svg>
<svg class="r" style="left:1160px;top:10px" width="25" height="25" viewBox="1160 10 25 25"><g fill="none" stroke="#84d2fb" stroke-width="1.35"><circle cx="1172.5" cy="22" r="7.5"/><ellipse cx="1172.5" cy="22" rx="3.1" ry="7.5"/><path d="M1165 22H1180"/></g></svg>
<svg class="r" style="left:1185px;top:18px" width="10" height="8" viewBox="1185 18 10 8"><path d="M1187.4 20H1194L1190.7 24.1Z" fill="#84d2fb"/></svg>
<svg class="r" style="left:1205px;top:8px" width="30" height="28" viewBox="1205 8 30 28"><g fill="none" stroke="#84d2fb"><path d="M1217.2 14.1A3.9 3.9 0 1 1 1214.2 16.9" stroke-width="3"/><path d="M1219.6 20.2L1229.2 29.8" stroke-width="3.9"/></g></svg>
<svg class="r" style="left:1234px;top:18px" width="10" height="8" viewBox="1234 18 10 8"><path d="M1236 20H1242.6L1239.3 24.1Z" fill="#84d2fb"/></svg>
<svg class="r" style="left:1264px;top:12px" width="19" height="19" viewBox="-9.5 -9.5 19 19"><path fill="#84d2fb" fill-rule="evenodd" d="M-1.6 -8.6H1.6L2.1 -6.3A6.6 6.6 0 0 1 4.2 -5.1L6.5 -5.9L8.1 -3.1L6.3 -1.5A6.6 6.6 0 0 1 6.3 1.5L8.1 3.1L6.5 5.9L4.2 5.1A6.6 6.6 0 0 1 2.1 6.3L1.6 8.6H-1.6L-2.1 6.3A6.6 6.6 0 0 1 -4.2 5.1L-6.5 5.9L-8.1 3.1L-6.3 1.5A6.6 6.6 0 0 1 -6.3 -1.5L-8.1 -3.1L-6.5 -5.9L-4.2 -5.1A6.6 6.6 0 0 1 -2.1 -6.3ZM0 -2.9A2.9 2.9 0 1 0 0.001 -2.9Z"/></svg>
<svg class="r" style="left:1300px;top:8px" width="30" height="28" viewBox="1300 8 30 28"><g fill="#84d2fb"><path d="M1313.8 14.9C1312.6 15.5 1311.9 17.5 1311.9 19.7C1311.9 22.8 1313.8 25.6 1316.2 25.6C1318.7 25.6 1320.6 22.9 1320.6 20.2C1320.6 17.6 1319.3 16 1317.3 15.6C1316 15.4 1314.8 15.2 1313.8 14.9Z"/><path d="M1308.5 29.8L1310.8 25.9H1315.4V29.8Z"/><path d="M1316.7 25.9H1321.6L1323.9 29.8H1316.7Z"/></g></svg>
<svg class="r" style="left:1460px;top:14px" width="12" height="10" viewBox="1460 14 12 10"><path d="M1462.8 16.9H1469.2L1466 21.1Z" fill="#84d2fb"/></svg>
<svg class="r" style="left:1495px;top:10px" width="24" height="24" viewBox="1495 10 24 24"><g fill="none" stroke="#84d2fb"><path d="M1502.1 15.95A7.7 7.7 0 1 0 1510.9 15.95" stroke-width="1.9"/><path d="M1506.5 13.4V22.2" stroke-width="1.9"/></g></svg>
</body></html>
